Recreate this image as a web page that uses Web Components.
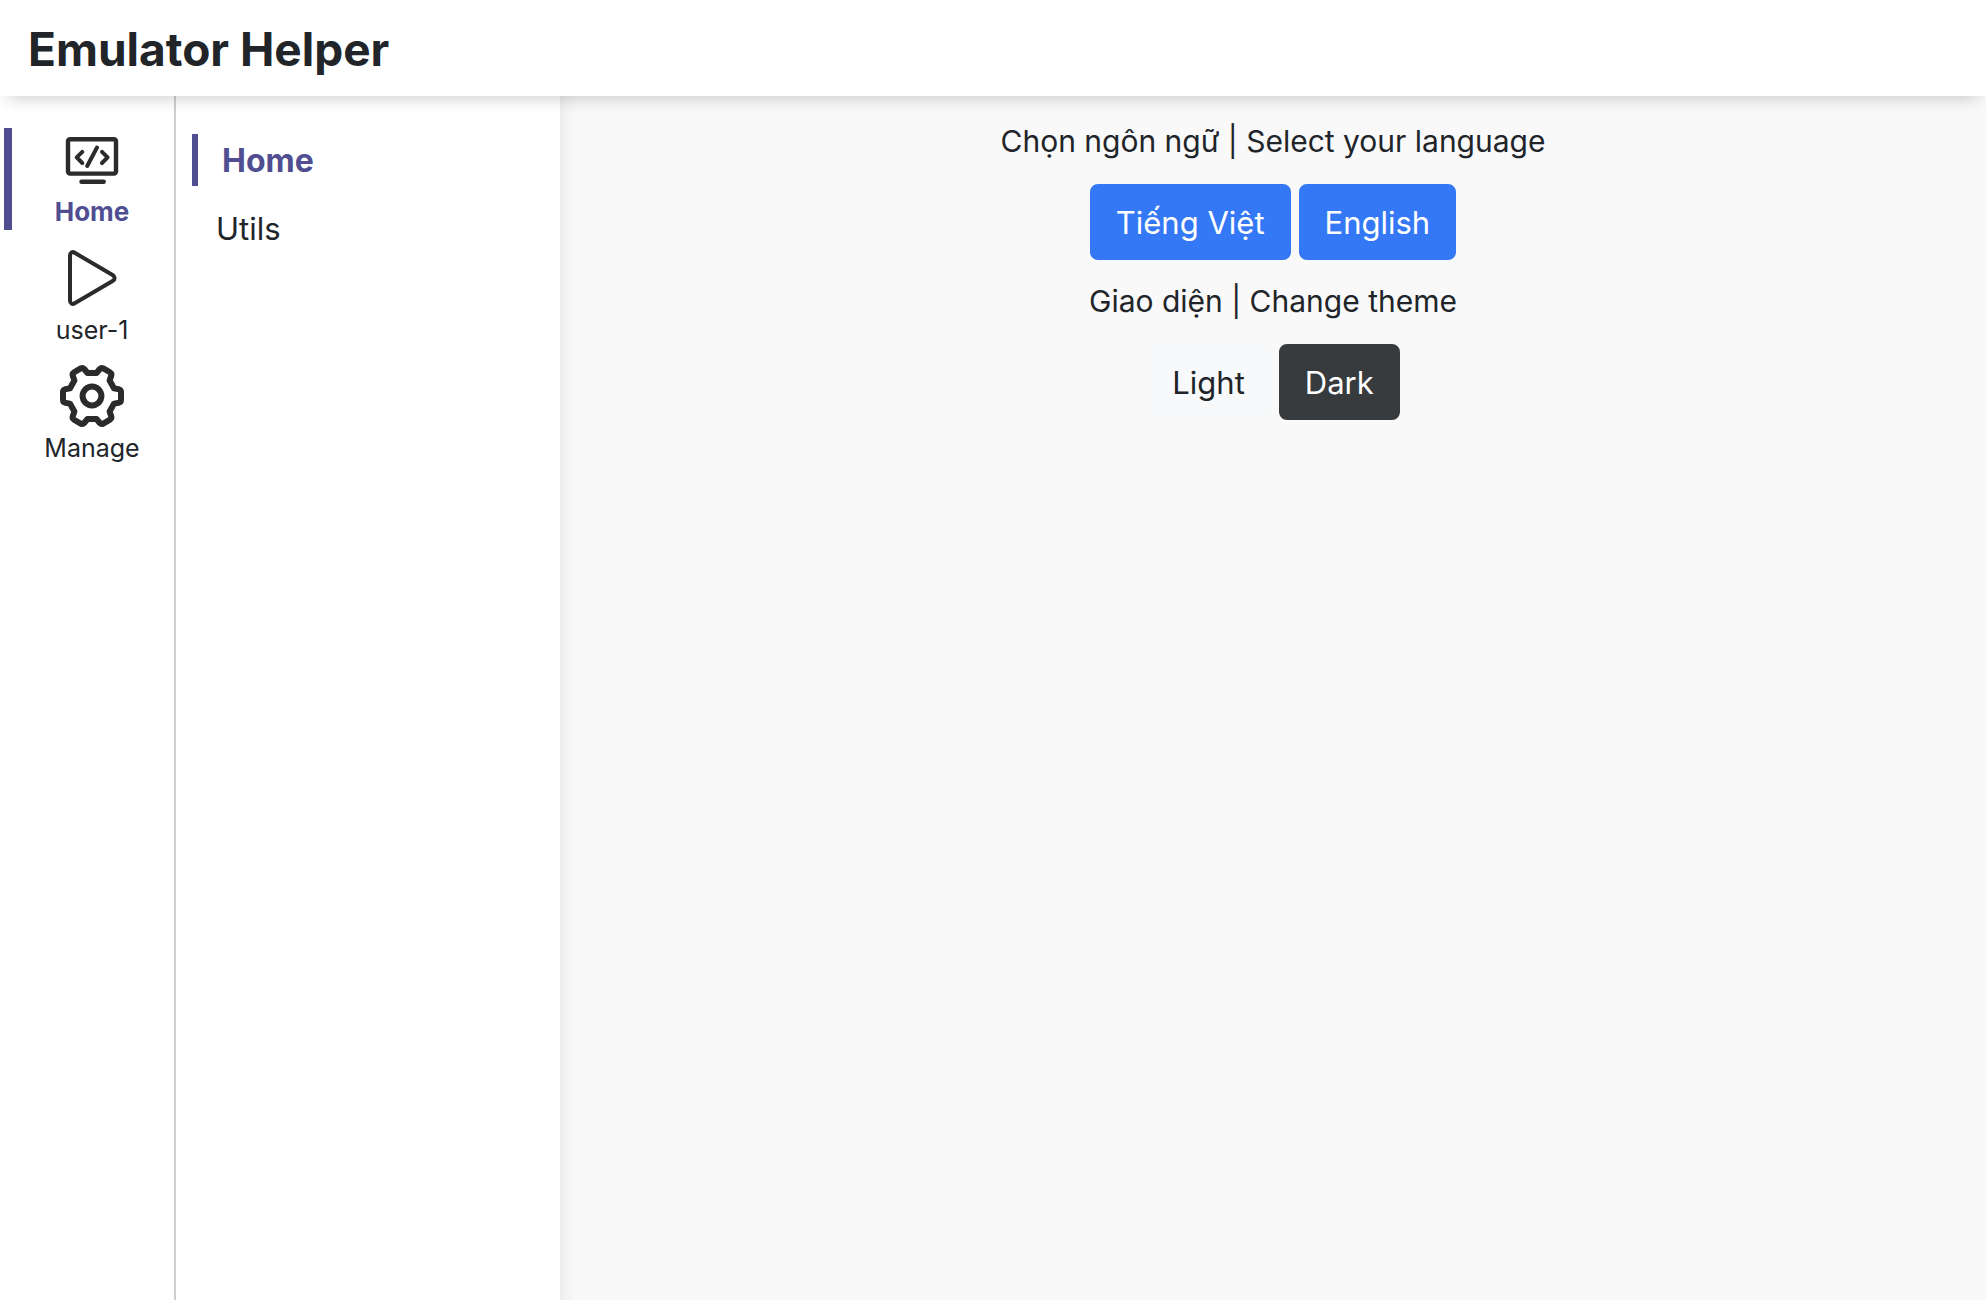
<!DOCTYPE html>
<html lang="en">
<head>
<meta charset="utf-8">
<title>Emulator Helper</title>
<style>
  html, body { height: 100%; }
  body { margin: 0; font-family: Inter, "Noto Sans", sans-serif; font-size: 31px; line-height: 48px; color: #212529; background: #fff; }
</style>
</head>
<body>
<emulator-app></emulator-app>
<script>
const define = (name, html) => {
  const tpl = document.createElement('template');
  tpl.innerHTML = html;
  customElements.define(name, class extends HTMLElement {
    constructor() {
      super();
      this.attachShadow({ mode: 'open' }).append(tpl.content.cloneNode(true));
    }
  });
};

define('app-header', `
<style>
  :host { display: block; position: relative; z-index: 2; background: #fff; padding: 21px 28px 19px; box-shadow: 0 10px 16px -8px rgba(0,0,0,.2); }
  h1 { margin: 0; font-size: 46px; line-height: 56px; font-weight: 700; }
</style>
<h1><slot></slot></h1>`);

define('rail-item', `
<style>
  :host { display: block; border-left: 8px solid transparent; }
  :host([active]) { border-color: #504e91; }
  a { display: flex; flex-direction: column; align-items: center; gap: 2px; color: #212529; text-decoration: none; font-size: 25px; line-height: 36px; }
  :host([active]) a { color: #504e91; font-size: 26px; font-weight: 700; }
  ::slotted(svg) { width: 64px; height: 64px; color: #2b2b2b; }
</style>
<a href="#"><slot name="icon"></slot><span><slot></slot></span></a>`);

define('app-rail', `
<style>
  :host { display: flex; flex-direction: column; gap: 16px; box-sizing: border-box; width: 176px; flex: none; padding: 32px 2px 0 4px; border-right: 2px solid #cfcfcf; }
</style>
<slot></slot>`);

define('nav-item', `
<style>
  :host { display: block; }
  a { display: block; padding: 3px 24px 1px; color: #212529; text-decoration: none; }
  :host([active]) a { border-left: 6px solid #504e91; color: #504e91; font-size: 32px; font-weight: 700; }
</style>
<a href="#"><slot></slot></a>`);

define('app-nav', `
<style>
  :host { display: flex; flex-direction: column; gap: 16px; box-sizing: border-box; width: 384px; flex: none; padding: 38px 16px 0; position: relative; background: #fff; box-shadow: -12px 0 16px 16px rgba(0,0,0,.07); clip-path: inset(0 -32px 0 0); }
</style>
<slot></slot>`);

define('app-button', `
<style>
  :host { display: block; --bg: #3478f6; --fg: #fff; }
  :host([variant=light]) { --bg: #f8f9fa; --fg: #212529; }
  :host([variant=dark]) { --bg: #373b3e; }
  button { display: block; margin: 0; border: 2px solid var(--bg); border-radius: 8px; padding: 13px 24px 11px; background: var(--bg); color: var(--fg); font: inherit; cursor: pointer; }
</style>
<button type="button"><slot></slot></button>`);

define('choice-group', `
<style>
  :host { display: flex; flex-direction: column; align-items: center; gap: 18px; }
  p { margin: 0; font-size: 30px; line-height: 50px; }
  div { display: flex; gap: 8px; }
</style>
<p><slot name="label"></slot></p><div><slot></slot></div>`);

define('app-content', `
<style>
  :host { display: flex; flex-direction: column; gap: 16px; flex: 1; padding-top: 20px; background: #f9f9f9; }
</style>
<slot></slot>`);

define('emulator-app', `
<style>
  :host { display: flex; flex-direction: column; min-height: 100%; }
  .body { display: flex; flex: 1; }
</style>
<app-header>Emulator Helper</app-header>
<div class="body">
  <app-rail>
    <rail-item active>
      <svg slot="icon" viewBox="0 0 64 64" fill="none" stroke="currentColor" stroke-width="4.4" stroke-linecap="round" stroke-linejoin="round" aria-hidden="true">
        <rect x="8" y="11.2" width="48" height="34.4" rx="2"/>
        <path d="M21.5 53.8h22.2"/>
        <path d="M22.3 23.8l-5.6 5.6 5.6 5.6M42 23.8l5.6 5.6-5.6 5.6M37 19.5L27.2 38" stroke-width="4"/>
      </svg>Home</rail-item>
    <rail-item>
      <svg slot="icon" viewBox="0 0 64 64" fill="none" stroke="currentColor" stroke-width="4" stroke-linejoin="round" aria-hidden="true">
        <path d="M10 9.5v45c0 3 2.2 4.200 4.700 2.800L52.600 35.100c2.700-1.600 2.700-4.500 0-6.100L14.700 6.800C12.200 5.300 10 6.500 10 9.500z"/>
      </svg>user-1</rail-item>
    <rail-item>
      <svg slot="icon" viewBox="0 0 64 64" fill="none" stroke="currentColor" stroke-width="6" stroke-linejoin="round" aria-hidden="true">
        <circle cx="32" cy="32" r="9.4"/>
        <path d="M27.5 9L24.200 5Q22.700 3.300 20.700 4.400L14 8.300Q12 9.500 12.800 11.800L14.400 16.600 9.900 24.400 5 25.300Q3 25.800 3 28V36Q3 38.200 5 38.700L9.900 39.600 14.400 47.400 12.800 52.200Q12 54.500 14 55.700L20.700 59.600Q22.700 60.700 24.200 59L27.500 55H36.500L39.800 59Q41.300 60.700 43.300 59.600L50 55.700Q52 54.500 51.200 52.200L49.600 47.400 54.100 39.600 59 38.700Q61 38.200 61 36V28Q61 25.800 59 25.300L54.100 24.400 49.600 16.600 51.200 11.800Q52 9.500 50 8.300L43.300 4.400Q41.300 3.300 39.800 5L36.500 9Z"/>
      </svg>Manage</rail-item>
  </app-rail>
  <app-nav>
    <nav-item active>Home</nav-item>
    <nav-item>Utils</nav-item>
  </app-nav>
  <app-content>
    <choice-group>
      <span slot="label">Chọn ngôn ngữ | Select your language</span>
      <app-button>Tiếng Việt</app-button>
      <app-button>English</app-button>
    </choice-group>
    <choice-group>
      <span slot="label">Giao diện | Change theme</span>
      <app-button variant="light">Light</app-button>
      <app-button variant="dark">Dark</app-button>
    </choice-group>
  </app-content>
</div>`);
</script>
</body>
</html>
